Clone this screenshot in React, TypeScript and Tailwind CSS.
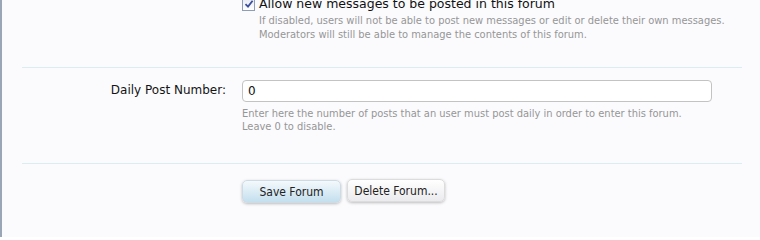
import React from 'react';

const font = { fontFamily: '"DejaVu Sans Condensed", "DejaVu Sans", Tahoma, sans-serif' };
const wide = { fontFamily: '"DejaVu Sans", Tahoma, sans-serif' };

function Row({ label, children, className = '' }: { label?: string; children: React.ReactNode; className?: string }) {
  return (
    <div className={`flex ${className}`}>
      <div className="w-[220px] shrink-0 pr-[16px] text-right text-[12px] text-[#141414]" style={wide}>
        {label}
      </div>
      <div className="flex-1">{children}</div>
    </div>
  );
}

export default function App() {
  return (
    <div
      className="h-[237px] w-[760px] overflow-hidden border-l-2 border-[#9aa6b6] bg-[#fbfbfe]"
      style={font}
    >
      <div className="ml-[20px] mr-[18px]">
        <Row className="-mt-[4px] pb-[25px]">
          <label className="flex items-center gap-[4px] text-[12.5px] leading-[16px] text-[#111]" style={wide}>
            <span className="flex h-[13px] w-[13px] items-center justify-center border border-[#8e9db8] bg-gradient-to-b from-[#e8ecf3] to-white">
              <svg viewBox="0 0 10 10" className="h-[10px] w-[10px]">
                <path d="M1.5 5.2 L4 7.6 L8.6 1.8" fill="none" stroke="#3a4fa0" strokeWidth="1.8" />
              </svg>
            </span>
            Allow new messages to be posted in this forum
          </label>
          <p className="pl-[17px] pt-[2px] text-[11px] leading-[14px] text-[#969696]">
            If disabled, users will not be able to post new messages or edit or delete their own messages.
            <br />
            Moderators will still be able to manage the contents of this forum.
          </p>
        </Row>

        <div className="h-px bg-[#dcedf2]" />

        <Row label="Daily Post Number:" className="pt-[13px] pb-[30px]">
          <div className="w-[470px]">
            <div className="-mt-[1px] flex h-[22px] items-center rounded-[4px] border border-[#c3c3c3] bg-white px-[5px] text-[12px] text-[#111]" style={wide}>
              0
            </div>
            <p className="pt-[5px] text-[11px] leading-[13px] text-[#969696]">
              Enter here the number of posts that an user must post daily in order to enter this forum.
              <br />
              Leave 0 to disable.
            </p>
          </div>
        </Row>

        <div className="h-px bg-[#dcedf2]" />

        <Row className="pt-[16px]">
          <div className="flex items-center gap-[6px]">
            <button className="h-[23px] w-[99px] rounded-[5px] border border-[#cfdbe4] bg-gradient-to-b from-[#f4f9fc] to-[#c3dfee] text-[12px] text-[#222] shadow-[0_1px_3px_rgba(0,0,0,0.25)]">
              Save Forum
            </button>
            <button className="-mt-[2px] h-[23px] w-[98px] rounded-[5px] border border-[#dcdcdc] bg-gradient-to-b from-white to-[#ebebef] text-[12px] text-[#222] shadow-[0_1px_3px_rgba(0,0,0,0.25)]">
              Delete Forum...
            </button>
          </div>
        </Row>
      </div>
    </div>
  );
}
